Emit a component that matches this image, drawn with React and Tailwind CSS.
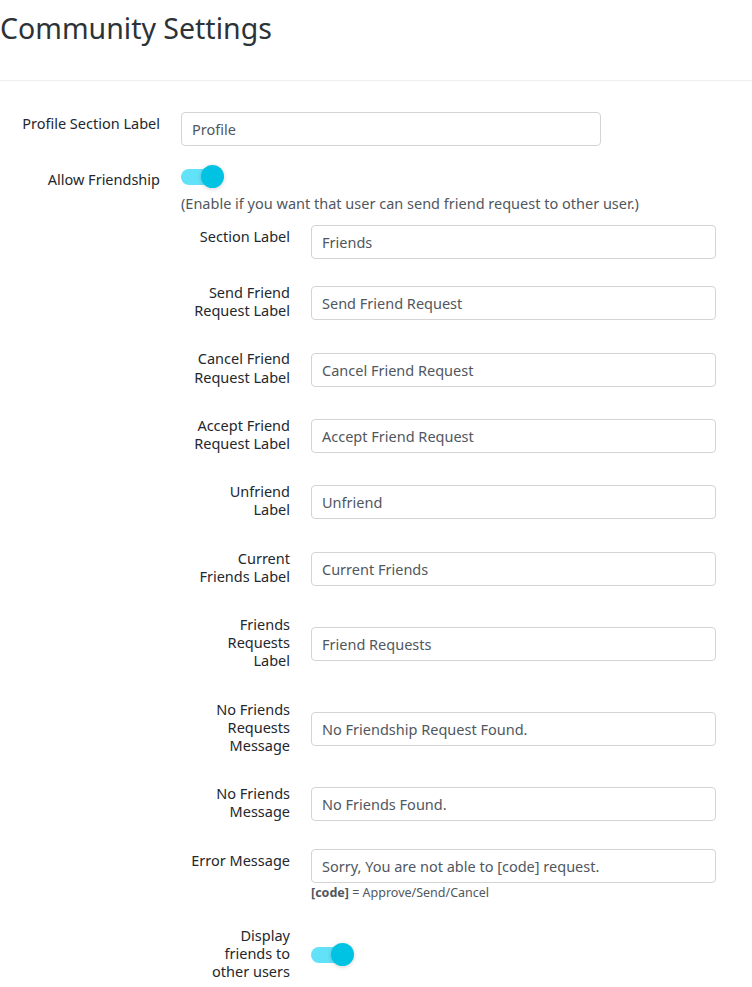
import React from 'react';

const Toggle = () => (
    <div className="relative w-[43px] h-[23px]">
        <div className="absolute left-0 top-[4px] w-[36px] h-[16px] rounded-full bg-[#62e2f8]" />
        <div className="absolute right-0 top-0 w-[23px] h-[23px] rounded-full bg-[#00c2e3] shadow-[0_1px_4px_rgba(0,0,0,0.18)]" />
    </div>
);

const TextInput = ({ value, width }) => (
    <input
        type="text"
        defaultValue={value}
        className={`${width} h-[34px] px-[10px] border border-[#d4d4d4] rounded-[4px] text-[14.5px] text-[#50575e] bg-white outline-none font-['Noto_Sans']`}
    />
);

const OuterRow = ({ label, children, cellClass = 'py-[11px] self-center' }) => (
    <div className="flex">
        <div className="w-[160px] shrink-0 text-right pt-[13px] pb-[17px] leading-[18.2px] self-start">{label}</div>
        <div className={`ml-[21px] ${cellClass}`}>{children}</div>
    </div>
);

const NestedRow = ({ label, children }) => (
    <div className="flex">
        <div className="w-[109px] shrink-0 text-right pt-[13px] pb-[17px] leading-[18.2px] self-start">{label}</div>
        <div className="ml-[21px] py-[11px] self-center">{children}</div>
    </div>
);

const nested = [
    { label: 'Section Label', value: 'Friends' },
    { label: <>Send Friend<br />Request Label</>, value: 'Send Friend Request' },
    { label: <>Cancel Friend<br />Request Label</>, value: 'Cancel Friend Request' },
    { label: <>Accept Friend<br />Request Label</>, value: 'Accept Friend Request' },
    { label: <>Unfriend<br />Label</>, value: 'Unfriend' },
    { label: <>Current<br />Friends Label</>, value: 'Current Friends' },
    { label: <>Friends<br />Requests<br />Label</>, value: 'Friend Requests' },
    { label: <>No Friends<br />Requests<br />Message</>, value: 'No Friendship Request Found.' },
    { label: <>No Friends<br />Message</>, value: 'No Friends Found.' },
];

export default function App() {
    return (
        <div className="min-h-screen bg-white font-['Noto_Sans'] text-[14.5px] text-[#23282d]">
            <h1 className="pt-[10px] pb-[34px] text-[28.5px] leading-[36px] font-normal text-[#2c3338] border-b border-[#eeeeee]">
                Community Settings
            </h1>

            <div className="pt-[20px]">
                <OuterRow label="Profile Section Label">
                    <TextInput value="Profile" width="w-[420px]" />
                </OuterRow>

                <OuterRow label="Allow Friendship" cellClass="pt-[8px] -ml-[1px]">
                    <Toggle />
                    <p className="mt-[6px] leading-[18px] text-[#50575e]">
                        (Enable if you want that user can send friend request to other user.)
                    </p>

                    <div className="mt-[2px]">
                        {nested.map((row, i) => (
                            <NestedRow key={i} label={row.label}>
                                <TextInput value={row.value} width="w-[405px]" />
                            </NestedRow>
                        ))}

                        <NestedRow label="Error Message">
                            <TextInput value="Sorry, You are not able to [code] request." width="w-[405px]" />
                            <p className="mt-[1px] text-[12.5px] leading-[18px] text-[#50575e]">
                                <strong className="font-bold">[code]</strong> = Approve/Send/Cancel
                            </p>
                        </NestedRow>

                        <NestedRow label={<>Display<br />friends to<br />other users</>}>
                            <Toggle />
                        </NestedRow>
                    </div>
                </OuterRow>
            </div>
        </div>
    );
}
